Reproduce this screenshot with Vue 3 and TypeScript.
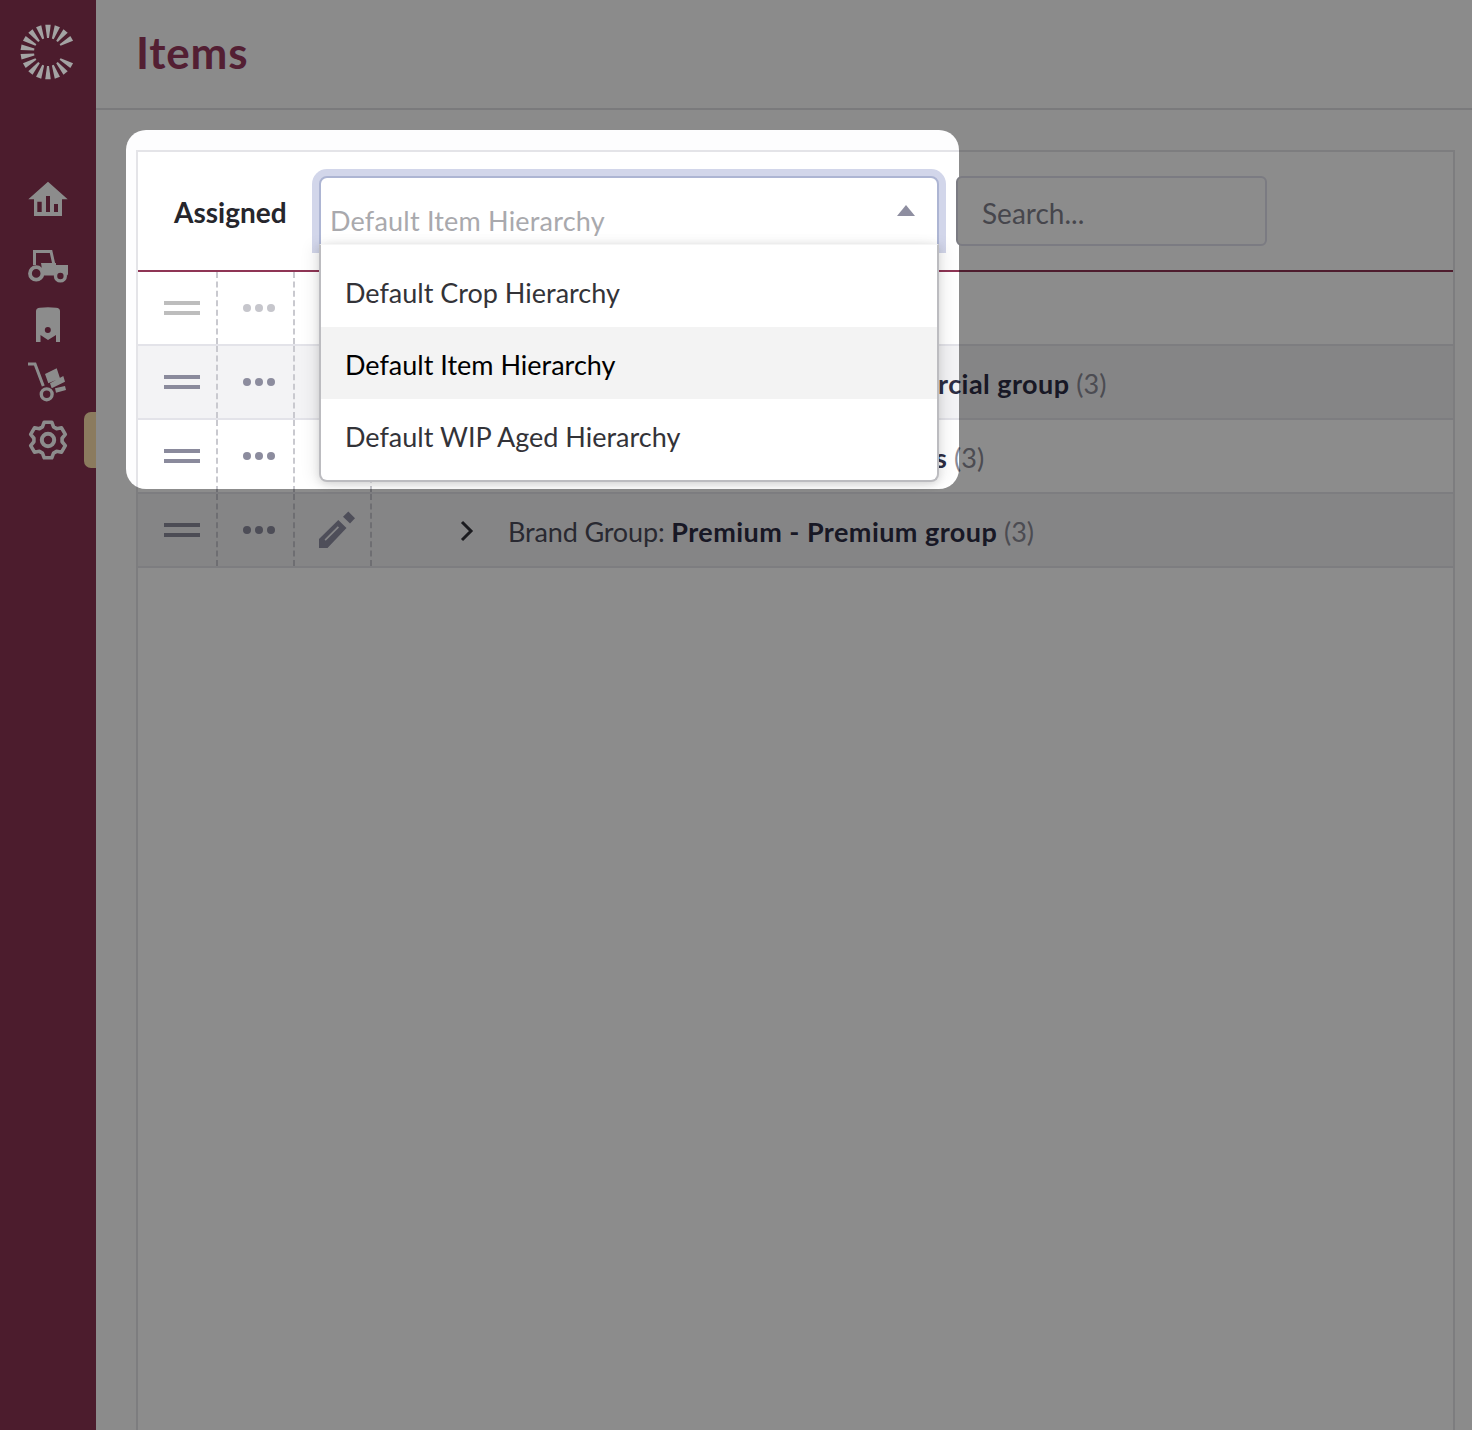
<script setup lang="ts">
const rays = Array.from({ length: 18 }, (_, i) => i)
  .filter((i) => i !== 4 && i !== 5)
  .map((i) => {
    const a = (i * 20 - 90) * (Math.PI / 180)
    const pt = (r: number, t: number) => `${(28 + r * Math.cos(t)).toFixed(2)},${(28 + r * Math.sin(t)).toFixed(2)}`
    return `${pt(27.5, a - 0.1)} ${pt(27.5, a + 0.1)} ${pt(14, a + 0.07)} ${pt(14, a - 0.07)}`
  })

const gearPath = (() => {
  const pts: string[] = []
  for (let i = 0; i < 6; i++) {
    const c = ((i * 60 - 90) * Math.PI) / 180
    const at = (r: number, d: number) => {
      const t = c + (d * Math.PI) / 180
      return `${(20 + r * Math.cos(t)).toFixed(2)} ${(20 + r * Math.sin(t)).toFixed(2)}`
    }
    pts.push(`${i ? 'L' : 'M'}${at(14.2, -23)}`, `L${at(18.2, -12)}`, `L${at(18.2, 12)}`, `L${at(14.2, 23)}`)
  }
  return pts.join(' ') + ' Z'
})()

interface Row {
  prefix: string
  name: string
  count: string
  faded: boolean
  shaded: boolean
}

const rows: Row[] = [
  { prefix: '', name: '', count: '', faded: true, shaded: false },
  { prefix: 'Brand Group: ', name: 'Commercial - Commercial group', count: '(3)', faded: false, shaded: true },
  { prefix: 'Brand Group: ', name: 'Global - Global brands', count: '(3)', faded: false, shaded: false },
  { prefix: 'Brand Group: ', name: 'Premium - Premium group', count: '(3)', faded: false, shaded: true },
]

const options = ['Default Crop Hierarchy', 'Default Item Hierarchy', 'Default WIP Aged Hierarchy']
</script>

<template>
  <div class="page">
    <aside class="sidebar">
      <svg class="logo" width="56" height="56" viewBox="0 0 56 56">
        <polygon v-for="(p, i) in rays" :key="i" :points="p" fill="#a3a3a3" />
      </svg>
      <nav class="nav">
        <svg class="ico-home" width="40" height="36" viewBox="0 0 40 36">
          <path fill="#fff" fill-rule="evenodd" d="M20 0.7 L39.7 18.3 H34 V35 H6 V18.3 H0.3 Z M9.3 20.7 V31 H13.7 V20.7 Z M18 15 V31 H22 V15 Z M26 23 V31 H30 V23 Z" />
        </svg>
        <svg class="ico-tractor" width="40" height="33" viewBox="0 0 40 33">
          <path fill="none" stroke="#fff" stroke-width="3" d="M6.5 15 V1.5 H23 L26 15" />
          <path fill="#fff" d="M13 13 H28 V15 H40 V24 Q40 25.5 38 25.5 H15 Z" />
          <circle cx="8.2" cy="23.4" r="6.2" fill="#8a3352" stroke="#fff" stroke-width="3.8" />
          <circle cx="32.4" cy="26" r="4.9" fill="#8a3352" stroke="#fff" stroke-width="3.4" />
        </svg>
        <svg class="ico-tank" width="24" height="35" viewBox="0 0 24 35">
          <path fill="#fff" d="M0 4 Q0 1.2 4 0.8 Q12 -0.4 20 0.8 Q24 1.2 24 4 V35 H20 V28 L12 33 L4.5 28 V35 H0 Z" />
          <circle cx="11.8" cy="23" r="3" fill="#8a3352" />
        </svg>
        <svg class="ico-cart" width="39" height="41" viewBox="0 0 39 41">
          <path fill="none" stroke="#fff" stroke-width="3" d="M0 2 H7 L15.3 24" />
          <circle cx="18.7" cy="32.3" r="5.4" fill="none" stroke="#fff" stroke-width="3.4" />
          <path fill="#fff" d="M17 12 L28.7 6.3 L32 16.3 L20.3 21.3 Z M22 21.3 L35.3 14 L37 19.7 L23.7 26.3 Z M27 26.3 L37 24 L38 28 L28 30.7 Z" />
        </svg>
        <svg class="ico-gear" width="40" height="40" viewBox="0 0 40 40">
          <path :d="gearPath" fill="none" stroke="#fff" stroke-width="3.6" stroke-linejoin="round" />
          <circle cx="20" cy="20" r="6.2" fill="none" stroke="#fff" stroke-width="4" />
        </svg>
      </nav>
      <span class="tab"></span>
    </aside>

    <main class="main">
      <header class="head"><h1>Items</h1></header>
      <section class="content">
        <div class="panel">
          <div class="toolbar">
            <span class="label">Assigned</span>
            <div class="select">
              <span class="placeholder">Default Item Hierarchy</span>
              <span class="caret"></span>
              <ul class="menu">
                <li v-for="(o, i) in options" :key="o" :class="{ active: i === 1 }">{{ o }}</li>
              </ul>
            </div>
            <div class="search">Search...</div>
          </div>
          <div v-for="(r, i) in rows" :key="i" class="row" :class="{ shaded: r.shaded, faded: r.faded }">
            <div class="cell">
              <span class="handle"><i></i><i></i></span>
            </div>
            <div class="cell">
              <span class="dots"><i></i><i></i><i></i></span>
            </div>
            <div class="cell">
              <svg width="38" height="38" viewBox="0 0 38 38">
                <path fill="#8e8ea3" fill-rule="evenodd" d="M2 37 V28 L21.3 9 L29.5 17 L10.5 37 Z M7.5 28.5 L20.8 15.2 L22 16.4 L8.7 29.7 Z" />
                <path fill="#8e8ea3" d="M26 5.7 L31.3 0.4 L38 7.3 L33 12.6 Z" />
              </svg>
            </div>
            <div v-if="r.name" class="cell-text">
              <svg class="chev" width="14" height="22" viewBox="0 0 14 22">
                <path d="M2 2 L11 11 L2 20" fill="none" stroke="#32323a" stroke-width="3" />
              </svg>
              <span class="txt">{{ r.prefix }}<b>{{ r.name }}</b> <em>{{ r.count }}</em></span>
            </div>
          </div>
        </div>
      </section>
    </main>
    <div class="spot"></div>
  </div>
</template>

<style>
html, body { margin: 0; background: #fff; }
</style>

<style scoped>
.page {
  position: relative;
  display: flex;
  height: 1430px;
  overflow: hidden;
  background: #fdfdfe;
  font-family: Lato, "Noto Sans", sans-serif;
  color: #3c3c42;
}
.sidebar {
  position: relative;
  flex: 0 0 96px;
  background: #8a3352;
}
.logo { position: absolute; left: 20px; top: 24px; z-index: 30; }
.nav svg { position: absolute; }
.ico-home { left: 28px; top: 181px; }
.ico-tractor { left: 28px; top: 250px; }
.ico-tank { left: 36px; top: 307px; }
.ico-cart { left: 28px; top: 362px; }
.ico-gear { left: 28px; top: 420px; }
.tab {
  position: absolute;
  right: 0;
  top: 412px;
  width: 12px;
  height: 56px;
  background: #fde1ab;
  border-radius: 7px 0 0 7px;
}
.main { flex: 1; display: flex; flex-direction: column; min-width: 0; }
.head {
  height: 110px;
  flex: none;
  box-sizing: border-box;
  border-bottom: 2px solid #dfdfe2;
  padding: 0 0 4px 40px;
  display: flex;
  align-items: center;
}
.head h1 {
  margin: 0;
  font-size: 44px;
  font-weight: 700;
  letter-spacing: 0.8px;
  color: #983a5e;
}
.content { flex: 1; padding: 40px 17px 0 40px; display: flex; }
.panel {
  flex: 1;
  border: 2px solid #e4e4e8;
  border-bottom: none;
  background: #fff;
}
.toolbar {
  height: 118px;
  border-bottom: 2px solid #8f3555;
  display: flex;
  align-items: flex-start;
  position: relative;
}
.label {
  margin: 44px 0 0 36px;
  width: 145px;
  font-size: 28px;
  font-weight: 700;
  color: #26262c;
  line-height: 32px;
}
.select {
  position: relative;
  z-index: 20;
  margin-top: 24px;
  width: 620px;
  height: 70px;
  box-sizing: border-box;
  background: #fff;
  border: 2px solid #adb5d3;
  border-radius: 8px 8px 0 0;
  box-shadow: 0 0 0 7px #d2d6ea;
}
.placeholder {
  position: absolute;
  left: 9px;
  top: 26px;
  font-size: 27px;
  letter-spacing: 0.2px;
  line-height: 34px;
  color: #a9a9ad;
}
.caret {
  position: absolute;
  right: 22px;
  top: 27px;
  border-left: 9px solid transparent;
  border-right: 9px solid transparent;
  border-bottom: 11px solid #8e8ea0;
}
.menu {
  position: absolute;
  left: -2px;
  right: -2px;
  top: 66px;
  margin: 0;
  padding: 10px 0 9px;
  list-style: none;
  background: #fff;
  border: 2px solid #bcbcc0;
  border-top: 1px solid #f6f6f6;
  border-radius: 0 0 8px 8px;
  box-shadow: 0 3px 8px rgba(0, 0, 0, 0.12), 8px 0 14px rgba(0, 0, 0, 0.05), -8px 0 14px rgba(0, 0, 0, 0.05);
}
.menu li {
  height: 72px;
  line-height: 76px;
  padding-left: 24px;
  font-size: 27px;
  color: #333338;
}
.menu li.active { background: #f3f3f3; color: #000; }
.search {
  position: relative;
  z-index: 20;
  margin: 24px 0 0 17px;
  width: 311px;
  height: 70px;
  box-sizing: border-box;
  border: 2px solid #7b7b82;
  border-radius: 6px;
  background: #8c8c8c;
  color: #46464c;
  font-size: 28px;
  line-height: 70px;
  padding-left: 24px;
}
.row {
  height: 74px;
  box-sizing: border-box;
  border-bottom: 2px solid #e3e3e9;
  display: flex;
  align-items: stretch;
}
.row.shaded { background: #f3f3f5; }
.cell {
  width: 77px;
  flex: none;
  box-sizing: border-box;
  border-right: 2px dashed #c9c9cf;
  padding-left: 6px;
  display: flex;
  align-items: center;
  justify-content: center;
}
.cell:first-child { width: 80px; padding-left: 9px; }
.handle { display: block; width: 36px; }
.handle i { display: block; height: 4px; background: #8a8a9c; margin-bottom: 6px; }
.handle i:last-child { margin-bottom: 0; }
.dots { display: flex; gap: 4px; }
.dots i { width: 8px; height: 8px; border-radius: 50%; background: #8c8c9e; }
.faded .handle i { background: #bdbdbd; }
.faded .dots i { background: #c6c6cc; }
.cell-text {
  display: flex;
  align-items: center;
  padding: 2px 0 0 88px;
  font-size: 27px;
  white-space: nowrap;
}
.chev { margin: 0 34px 0 0; }
.txt { color: #4c4c5a; letter-spacing: -0.15px; }
.txt b { font-weight: 700; color: #2d2d44; letter-spacing: 0.45px; }
.txt em { font-style: normal; color: #8a8a95; letter-spacing: 0; }
.spot {
  position: absolute;
  left: 126px;
  top: 130px;
  width: 833px;
  height: 359px;
  border-radius: 20px;
  box-shadow: 0 0 0 3000px rgba(0, 0, 0, 0.45);
  z-index: 10;
  pointer-events: none;
}
</style>
